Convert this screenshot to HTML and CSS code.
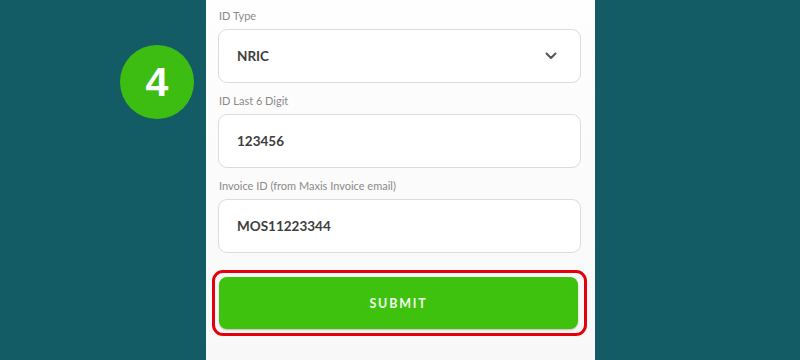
FILE: index.html
```html
<!DOCTYPE html>
<html>
<head>
<meta charset="utf-8">
<link rel="stylesheet" href="styles.css">
</head>
<body>
<div class="stage">
  <div class="side">
    <div class="step">4</div>
  </div>
  <div class="panel">
    <div class="field">
      <div class="label">ID Type</div>
      <div class="input select">
        <span>NRIC</span>
        <svg class="chev" width="12" height="8" viewBox="0 0 12 8"><path d="M1.5 1.5 L6 6 L10.5 1.5" fill="none" stroke="#555" stroke-width="2" stroke-linecap="round" stroke-linejoin="round"/></svg>
      </div>
    </div>
    <div class="field">
      <div class="label">ID Last 6 Digit</div>
      <div class="input"><span>123456</span></div>
    </div>
    <div class="field">
      <div class="label">Invoice ID (from Maxis Invoice email)</div>
      <div class="input"><span>MOS11223344</span></div>
    </div>
    <div class="highlight">
      <div class="submit">SUBMIT</div>
    </div>
  </div>
  <div class="side right"></div>
</div>
</body>
</html>
```
FILE: styles.css
```css
html, body {
  margin: 0;
  padding: 0;
}
body {
  width: 800px;
  height: 360px;
  overflow: hidden;
  background: #145c65;
  font-family: "Lato", "Open Sans", sans-serif;
}
.stage {
  display: flex;
  height: 360px;
}
.side {
  width: 206px;
  flex: none;
  padding: 45px 0 0 120px;
  box-sizing: border-box;
}
.side.right {
  flex: 1;
  padding: 0;
}
.step {
  width: 74px;
  height: 74px;
  border-radius: 50%;
  background: #3dbd12;
  color: #fff;
  font-family: "Liberation Sans", Arial, sans-serif;
  font-weight: bold;
  font-size: 41px;
  display: flex;
  align-items: center;
  justify-content: center;
}
.panel {
  width: 389px;
  flex: none;
  background: linear-gradient(#fefefe, #f8f8f8);
  padding: 9px 14px 0 12px;
  box-sizing: border-box;
  display: flex;
  flex-direction: column;
}
.field {
  margin-bottom: 11px;
}
.label {
  font-size: 11px;
  line-height: 14px;
  color: #8a8a8a;
  margin-bottom: 6px;
  padding-left: 1px;
}
.input {
  height: 54px;
  box-sizing: border-box;
  border: 1.5px solid #dcdcdc;
  border-radius: 9px;
  background: #fff;
  display: flex;
  align-items: center;
  padding: 0 17px 0 18px;
  font-size: 13.5px;
  font-weight: bold;
  color: #3d3d3d;
}
.select {
  justify-content: space-between;
}
.chev {
  margin-right: 6px;
}
.highlight {
  margin: 6px -6px 0 -6px;
  border: 3px solid #e5000c;
  border-radius: 11px;
  padding: 4px 6px 4px 4px;
}
.submit {
  height: 52px;
  border-radius: 8px;
  background: #3fc20d;
  box-shadow: 0 1px 2px rgba(0,0,0,0.25);
  color: #eef9e8;
  font-size: 12.5px;
  font-weight: bold;
  letter-spacing: 1.8px;
  display: flex;
  align-items: center;
  justify-content: center;
}
```
